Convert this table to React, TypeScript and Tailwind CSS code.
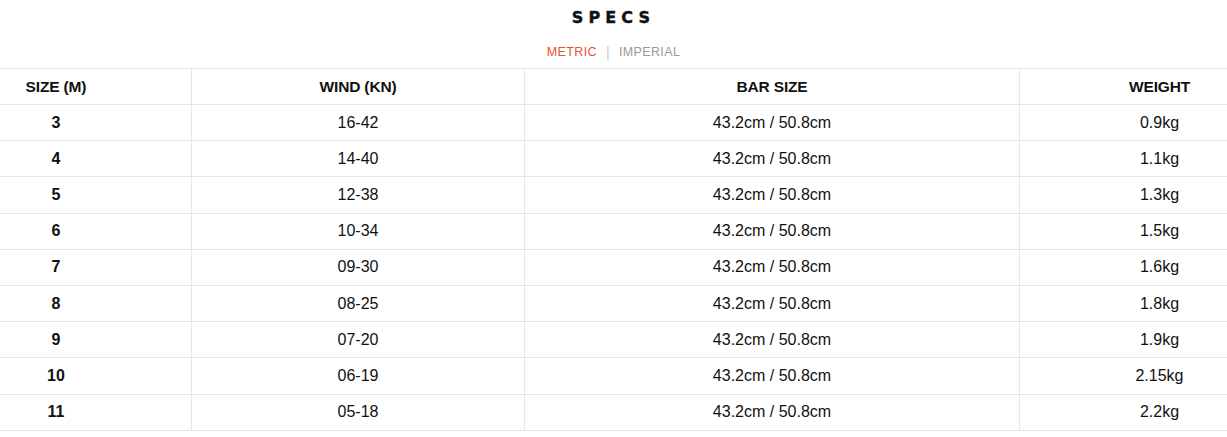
const rows = [
  ["3", "16-42", "43.2cm / 50.8cm", "0.9kg"],
  ["4", "14-40", "43.2cm / 50.8cm", "1.1kg"],
  ["5", "12-38", "43.2cm / 50.8cm", "1.3kg"],
  ["6", "10-34", "43.2cm / 50.8cm", "1.5kg"],
  ["7", "09-30", "43.2cm / 50.8cm", "1.6kg"],
  ["8", "08-25", "43.2cm / 50.8cm", "1.8kg"],
  ["9", "07-20", "43.2cm / 50.8cm", "1.9kg"],
  ["10", "06-19", "43.2cm / 50.8cm", "2.15kg"],
  ["11", "05-18", "43.2cm / 50.8cm", "2.2kg"],
];

const cols = "grid grid-cols-[191px_333px_495px_1fr]";

export default function App() {
  return (
    <div className="w-[1227px] bg-white text-[#111] font-['Liberation_Sans',Arial,sans-serif]">
      <div className="pt-[9px] text-center">
        <h2 className="text-[16px] font-bold tracking-[0.32em] leading-[17px] font-['DejaVu_Sans',sans-serif] [-webkit-text-stroke:0.4px_#111]">SPECS</h2>
        <div className="mt-[18px] flex justify-center items-center gap-[9px] text-[12.5px] tracking-[0.03em] leading-[16px]">
          <span className="text-[#e4532f]">METRIC</span>
          <span className="text-[#c8c8c8] text-[14px]">|</span>
          <span className="text-[#999]">IMPERIAL</span>
        </div>
      </div>

      <div className="mt-[8px] border-t border-[#e6e6e6]">
        <div className={`${cols} h-[36px] items-stretch border-b border-[#e6e6e6] text-[15.5px] font-bold tracking-[-0.01em]`}>
          <div className="flex items-center justify-center pr-[79px]">SIZE (M)</div>
          <div className="flex items-center justify-center border-l border-[#e6e6e6]">WIND (KN)</div>
          <div className="flex items-center justify-center border-l border-[#e6e6e6]">BAR SIZE</div>
          <div className="flex items-center justify-center border-l border-[#e6e6e6] pl-[72px]">WEIGHT</div>
        </div>
        {rows.map((r) => (
          <div key={r[0]} className={`${cols} h-[36.2px] border-b border-[#e6e6e6] text-[16px]`}>
            <div className="flex items-center justify-center pr-[79px] font-bold">{r[0]}</div>
            <div className="flex items-center justify-center border-l border-[#e6e6e6]">{r[1]}</div>
            <div className="flex items-center justify-center border-l border-[#e6e6e6]">{r[2]}</div>
            <div className="flex items-center justify-center border-l border-[#e6e6e6] pl-[72px]">{r[3]}</div>
          </div>
        ))}
      </div>
      <div className="h-[6px]" />
    </div>
  );
}
